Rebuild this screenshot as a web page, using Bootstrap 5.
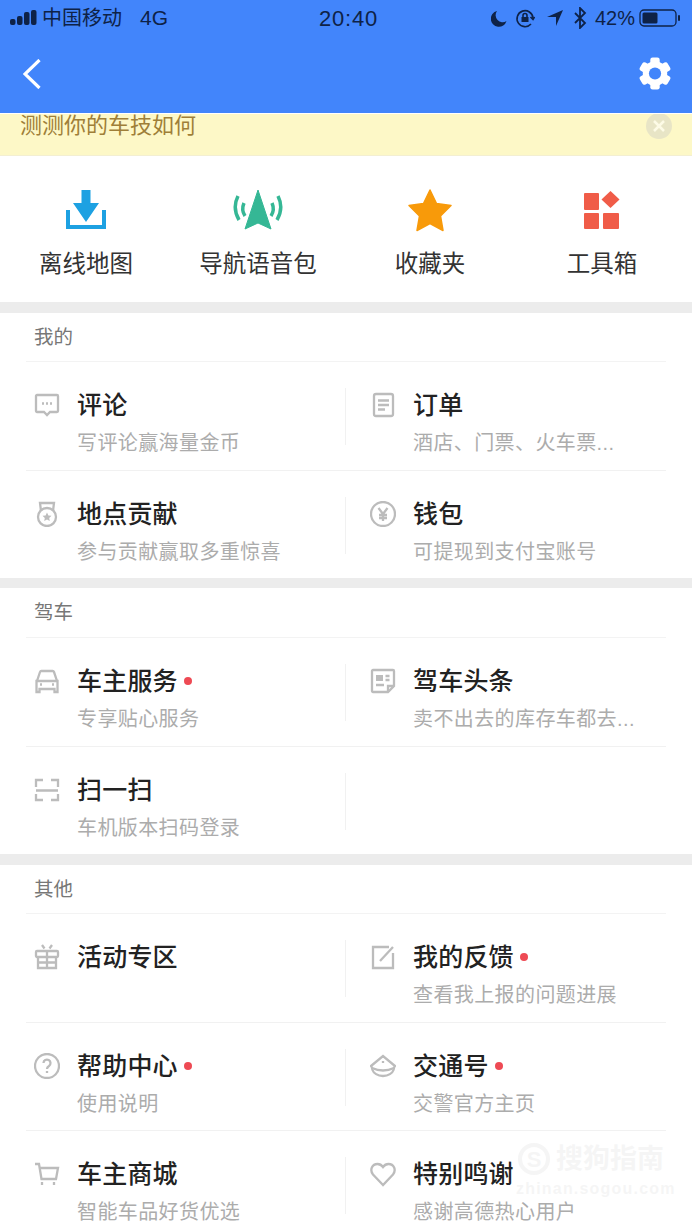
<!DOCTYPE html>
<html lang="zh-CN">

<head>
  <meta charset="UTF-8">
  <meta name="viewport" content="width=device-width, initial-scale=1.0">
  <title>更多工具</title>
  <link href="https://cdn.jsdelivr.net/npm/bootstrap@5.3.0/dist/css/bootstrap.min.css" rel="stylesheet">
  <style>
    body {
      width: 692px;
      height: 1230px;
      overflow: hidden;
      position: relative;
      background: #fff;
      font-family: "Liberation Sans", "Noto Sans CJK SC", sans-serif;
    }

    .top-area {
      background: #4285fb;
    }

    .status-bar {
      height: 36px;
      padding: 0 11px 0 10px;
      color: #0e2247;
      font-size: 20px;
    }

    .status-side {
      flex: 1 1 0;
    }

    .status-time {
      margin-left: 6px;
      font-size: 22px;
      font-weight: 500;
      letter-spacing: .8px;
    }

    .net-type {
      margin-left: 18px;
      font-size: 21px;
    }

    .status-arrow {
      margin-left: 11px;
    }

    .status-bt {
      margin-left: 9px;
    }

    .app-bar {
      height: 77px;
      padding: 0 21px 2px 23px;
    }

    .tip-banner {
      height: 42px;
      margin-top: 1px;
      padding: 0 20px;
      background: #fdf8c7;
      border-bottom: 1px solid #f3efd2;
      color: #9f7f38;
      font-size: 22px;
      line-height: 24px;
    }

    .quick-row {
      height: 146px;
      padding: 32px 4px 0 0;
    }

    .quick-icon {
      height: 44px;
    }

    .quick-label {
      margin-top: 16px;
      color: #333;
      font-size: 23.5px;
      line-height: 32px;
    }

    .gap-band {
      height: 11px;
      background: #ececec;
    }

    .gap-band-sm {
      height: 10px;
    }

    .menu-group {
      padding: 0 26px;
    }

    .group-title {
      height: 49px;
      padding-left: 8px;
      border-bottom: 1px solid #f3f3f3;
      color: #777;
      font-size: 19.5px;
      line-height: 48px;
    }

    .group-title-tall {
      height: 50px;
      line-height: 49px;
    }

    .menu-line {
      height: 108.5px;
      border-bottom: 1px solid #f1f1f1;
    }

    .menu-line-last {
      height: 107.5px;
      border-bottom: 0;
    }

    .menu-cell {
      padding: 26px 0 0 8px;
      gap: 17px;
    }

    .menu-cell-right {
      margin-left: -1px;
      padding-left: 25px;
      background: linear-gradient(#f1f1f1, #f1f1f1) left 26px / 1px 57px no-repeat;
    }

    .menu-icon {
      flex: none;
      width: 26px;
      height: 26px;
      margin-top: 4px;
      fill: none;
      stroke: #bcbcbc;
      stroke-width: 2.3;
    }

    .menu-name {
      color: #222;
      font-size: 25px;
      font-weight: 500;
      letter-spacing: .2px;
      line-height: 34px;
    }

    .new-dot {
      display: inline-block;
      width: 8px;
      height: 8px;
      margin-left: 6px;
      border-radius: 50%;
      background: #ee4a54;
      vertical-align: 5px;
    }

    .menu-desc {
      margin-top: 7px;
      color: #acacac;
      font-size: 20px;
      letter-spacing: .4px;
      line-height: 28px;
      white-space: nowrap;
    }

    /* faint watermark over the last row */
    .water-mark {
      position: absolute;
      left: 516px;
      top: 1143px;
      width: 156px;
      color: #000;
      opacity: .035;
      line-height: 1;
    }

    .water-mark-name {
      font-size: 27px;
      font-weight: 700;
    }

    .water-mark-url {
      margin-top: 6px;
      font-size: 16px;
      font-weight: 700;
      letter-spacing: 1.2px;
    }
  </style>
</head>

<body>
  <div class="top-area">
    <div class="status-bar d-flex align-items-center">
      <div class="status-side d-flex align-items-center">
        <svg width="28" height="16" viewBox="0 0 28 16" fill="#0e2247">
          <rect x="0" y="9" width="5.500" height="6" rx="2" />
          <rect x="7" y="6" width="5.500" height="9" rx="2" />
          <rect x="14" y="2" width="5.500" height="13" rx="2" />
          <rect x="21" y="0" width="5.500" height="15" rx="2" />
        </svg>
        <span class="ms-1">中国移动</span>
        <span class="net-type">4G</span>
      </div>
      <div class="status-time">20:40</div>
      <div class="status-side d-flex align-items-center justify-content-end">
        <svg width="16" height="17" viewBox="0 0 16 17" fill="#0e2247">
          <path d="M6 1a8 8 0 1 0 9.500 10A7 7 0 0 1 6 1z" />
        </svg>
        <svg class="ms-2" width="20" height="20" viewBox="0 0 20 20" fill="none" stroke="#0e2247" stroke-width="1.600">
          <path d="M16 16a8 8 0 1 1 2-6" />
          <path d="M15.500 9l2.500 2.500 1.500-2.500" />
          <rect x="6.500" y="9" width="7" height="5" fill="#0e2247" stroke="none" />
          <path d="M8 9V7.500a2 2 0 0 1 4 0V9" />
        </svg>
        <svg class="status-arrow" width="18" height="18" viewBox="0 0 18 18" fill="#0e2247">
          <path d="M17 1L10 17V8H1z" />
        </svg>
        <svg class="status-bt" width="14" height="22" viewBox="0 0 14 22" fill="none" stroke="#0e2247" stroke-width="1.800">
          <path d="M2 6l10 10-5 5V1l5 5L2 16" />
        </svg>
        <span class="ms-2">42%</span>
        <svg class="ms-1" width="42" height="20" viewBox="0 0 42 20">
          <rect x="1" y="2" width="36" height="16" rx="4" fill="none" stroke="#0e2247" stroke-width="1.300" />
          <rect x="3.500" y="4.500" width="15" height="11" rx="1.500" fill="#0e2247" />
          <rect x="39" y="7" width="2" height="6" rx="1" fill="#0e2247" />
        </svg>
      </div>
    </div>
    <nav class="navbar app-bar">
      <svg width="18" height="30" viewBox="0 0 18 30" fill="none" stroke="#fff" stroke-width="3.200">
        <path d="M16.500 1L2 15l14.500 14" />
      </svg>
      <svg width="32" height="33" viewBox="0 0 34 35">
        <g fill="#fff">
          <rect x="12" y="0.500" width="10" height="34" rx="2.500" />
          <rect x="12" y="0.500" width="10" height="34" rx="2.500" transform="rotate(60 17 17.500)" />
          <rect x="12" y="0.500" width="10" height="34" rx="2.500" transform="rotate(120 17 17.500)" />
        </g>
        <circle cx="17" cy="17.500" r="9.500" fill="none" stroke="#fff" stroke-width="7" />
        <circle cx="17" cy="17.500" r="6.500" fill="#4285fb" />
      </svg>
    </nav>
  </div>

  <div class="tip-banner d-flex justify-content-between">
    <span>测测你的车技如何</span>
    <svg width="26" height="26" viewBox="0 0 26 26">
      <circle cx="13" cy="12" r="13" fill="#e8e5c6" />
      <path d="M8 7l10 10M18 7L8 17" stroke="#fdfbe6" stroke-width="2.500" />
    </svg>
  </div>

  <div class="quick-row row g-0 text-center">
    <div class="col-3">
      <svg class="quick-icon" width="44" height="44" viewBox="0 0 44 44">
        <path d="M17.500 2h9v13h8.500L22 34 9 15h8.500z" fill="#1da1e2" />
        <path d="M2 22h4v15h32V22h4v19H2z" fill="#1da1e2" />
      </svg>
      <div class="quick-label">离线地图</div>
    </div>
    <div class="col-3">
      <svg class="quick-icon" width="54" height="44" viewBox="0 0 54 44">
        <path d="M27 2l13 39-13-6-13 6z" fill="#35b795" stroke="#35b795" stroke-linejoin="round" />
        <g fill="none" stroke="#35b795" stroke-width="3.500">
          <path d="M7 8q-6 12 1 24" />
          <path d="M13 15q-3 7 1 13" />
          <path d="M47 8q6 12-1 24" />
          <path d="M41 15q3 7-1 13" />
        </g>
      </svg>
      <div class="quick-label">导航语音包</div>
    </div>
    <div class="col-3">
      <svg class="quick-icon" width="46" height="44" viewBox="0 0 46 44">
        <path d="M23 2l6.500 13.500 14.500 2-10.500 10.500 2.500 14.500-13-7-13 7 2.500-14.500L2 17.500l14.500-2z" fill="#f89a0a" stroke="#f89a0a" stroke-width="1.500" stroke-linejoin="round" />
      </svg>
      <div class="quick-label">收藏夹</div>
    </div>
    <div class="col-3">
      <svg class="quick-icon" width="40" height="44" viewBox="0 0 40 44" fill="#f05c48">
        <rect x="2" y="5" width="15" height="17" rx="1" />
        <rect x="2" y="25" width="15" height="16" rx="1" />
        <rect x="21" y="25" width="16" height="16" rx="1" />
        <path d="M28.500 3l9 8.500-9 8.500-9-8.500z" />
      </svg>
      <div class="quick-label">工具箱</div>
    </div>
  </div>

  <div class="gap-band"></div>

  <section class="menu-group">
    <div class="group-title">我的</div>
    <div class="menu-line row g-0">
      <div class="col-6 d-flex menu-cell">
        <svg class="menu-icon" viewBox="0 0 26 26">
          <path d="M3 3h20a1 1 0 0 1 1 1v15a1 1 0 0 1-1 1h-7l-3 3-3-3H3a1 1 0 0 1-1-1V4a1 1 0 0 1 1-1z" />
          <path d="M8 11.500h2M12 11.500h2M16 11.500h2" />
        </svg>
        <div>
          <div class="menu-name">评论</div>
          <div class="menu-desc">写评论赢海量金币</div>
        </div>
      </div>
      <div class="col-6 d-flex menu-cell menu-cell-right">
        <svg class="menu-icon" viewBox="0 0 26 26">
          <rect x="4" y="2" width="19" height="22" rx="2" />
          <path d="M8 8.500h11M8 13h11M8 17.500h7" />
        </svg>
        <div>
          <div class="menu-name">订单</div>
          <div class="menu-desc">酒店、门票、火车票...</div>
        </div>
      </div>
    </div>
    <div class="menu-line menu-line-last row g-0">
      <div class="col-6 d-flex menu-cell">
        <svg class="menu-icon" viewBox="0 0 26 26">
          <path d="M7 10L6 2h14l-1 8" />
          <circle cx="13" cy="16" r="9" />
          <path d="M13 11.500l1.400 2.900 3.100.4-2.300 2.100.6 3.100-2.800-1.500-2.800 1.500.6-3.100-2.300-2.100 3.100-.4z" fill="#bcbcbc" stroke="none" />
        </svg>
        <div>
          <div class="menu-name">地点贡献</div>
          <div class="menu-desc">参与贡献赢取多重惊喜</div>
        </div>
      </div>
      <div class="col-6 d-flex menu-cell menu-cell-right">
        <svg class="menu-icon" viewBox="0 0 26 26">
          <circle cx="13" cy="13" r="12" />
          <path d="M8.500 7l4.500 6 4.500-6M13 13v7M9 14h8M9 17h8" />
        </svg>
        <div>
          <div class="menu-name">钱包</div>
          <div class="menu-desc">可提现到支付宝账号</div>
        </div>
      </div>
    </div>
  </section>

  <div class="gap-band gap-band-sm"></div>

  <section class="menu-group">
    <div class="group-title group-title-tall">驾车</div>
    <div class="menu-line row g-0">
      <div class="col-6 d-flex menu-cell">
        <svg class="menu-icon" viewBox="0 0 26 26">
          <path d="M3 13l3-9a1.500 1.500 0 0 1 1.500-1h11A1.500 1.500 0 0 1 20 4l3 9" />
          <path d="M2.500 13h21v11h-3v-3h-15v3h-3z" />
          <path d="M6 16.500h2M18 16.500h2" />
        </svg>
        <div>
          <div class="menu-name">车主服务<span class="new-dot"></span></div>
          <div class="menu-desc">专享贴心服务</div>
        </div>
      </div>
      <div class="col-6 d-flex menu-cell menu-cell-right">
        <svg class="menu-icon" viewBox="0 0 26 26">
          <path d="M3 2h20a1 1 0 0 1 1 1v15l-6 6H3a1 1 0 0 1-1-1V3a1 1 0 0 1 1-1z" />
          <path d="M18 24v-6h6" />
          <rect x="6" y="7" width="7" height="6" fill="#bcbcbc" stroke="none" />
          <path d="M15.500 8h4M15.500 12h4M6 17h8" />
        </svg>
        <div>
          <div class="menu-name">驾车头条</div>
          <div class="menu-desc">卖不出去的库存车都去...</div>
        </div>
      </div>
    </div>
    <div class="menu-line menu-line-last row g-0">
      <div class="col-6 d-flex menu-cell">
        <svg class="menu-icon" viewBox="0 0 26 26">
          <path d="M2 10V3h7M17 3h7v7M2 13.500h22M2 17v6h7M17 23h7v-6" />
        </svg>
        <div>
          <div class="menu-name">扫一扫</div>
          <div class="menu-desc">车机版本扫码登录</div>
        </div>
      </div>
      <div class="col-6 d-flex menu-cell menu-cell-right"></div>
    </div>
  </section>

  <div class="gap-band"></div>

  <section class="menu-group">
    <div class="group-title">其他</div>
    <div class="menu-line row g-0">
      <div class="col-6 d-flex menu-cell">
        <svg class="menu-icon" viewBox="0 0 26 26">
          <rect x="2" y="7" width="22" height="6" rx="1" />
          <path d="M4 13v11h18V13M13 7v17M4 18.500h18" />
          <path d="M8 1l2.500 3.500M18 1l-2.500 3.500" />
        </svg>
        <div>
          <div class="menu-name">活动专区</div>
        </div>
      </div>
      <div class="col-6 d-flex menu-cell menu-cell-right">
        <svg class="menu-icon" viewBox="0 0 26 26">
          <path d="M19 3H3v21h20V9" />
          <path d="M10 17L23 3" />
        </svg>
        <div>
          <div class="menu-name">我的反馈<span class="new-dot"></span></div>
          <div class="menu-desc">查看我上报的问题进展</div>
        </div>
      </div>
    </div>
    <div class="menu-line row g-0">
      <div class="col-6 d-flex menu-cell">
        <svg class="menu-icon" viewBox="0 0 26 26">
          <circle cx="13" cy="13" r="12" />
          <path d="M9.500 10a3.500 3.500 0 1 1 5.500 3c-1.300.8-2 1.500-2 3" />
          <path d="M13 18v2" />
        </svg>
        <div>
          <div class="menu-name">帮助中心<span class="new-dot"></span></div>
          <div class="menu-desc">使用说明</div>
        </div>
      </div>
      <div class="col-6 d-flex menu-cell menu-cell-right">
        <svg class="menu-icon" viewBox="0 0 26 26">
          <path d="M1 13L13 3l12 10c-1 1-1 2-1.500 4-1 3-5 6-10.500 6S3.500 20 2.500 17C2 15 2 14 1 13z" />
          <path d="M2 15q11 5 22 0" />
          <path d="M13 8v2" />
        </svg>
        <div>
          <div class="menu-name">交通号<span class="new-dot"></span></div>
          <div class="menu-desc">交警官方主页</div>
        </div>
      </div>
    </div>
    <div class="menu-line menu-line-last row g-0">
      <div class="col-6 d-flex menu-cell">
        <svg class="menu-icon" viewBox="0 0 26 26">
          <path d="M1 3h4l2.500 15h14.500L24 7H6" />
          <path d="M8 21v3M20 21v3" />
        </svg>
        <div>
          <div class="menu-name">车主商城</div>
          <div class="menu-desc">智能车品好货优选</div>
        </div>
      </div>
      <div class="col-6 d-flex menu-cell menu-cell-right">
        <svg class="menu-icon" viewBox="0 0 26 26">
          <path d="M13 24L3 13.500C-.5 9 2 3 7.500 3c2.500 0 4.200 1.200 5.500 3 1.300-1.800 3-3 5.500-3 5.500 0 8 6 4.500 10.500z" />
        </svg>
        <div>
          <div class="menu-name">特别鸣谢</div>
          <div class="menu-desc">感谢高德热心用户</div>
        </div>
      </div>
    </div>
  </section>

  <div class="water-mark">
    <div class="water-mark-name d-flex align-items-center">
      <svg class="me-1" width="36" height="32" viewBox="0 0 36 32">
        <circle cx="18" cy="16" r="14" fill="none" stroke="#000" stroke-width="4" />
        <text x="18" y="24" text-anchor="middle" font-size="22" font-weight="700" font-family="Liberation Sans">S</text>
      </svg>
      <span>搜狗指南</span>
    </div>
    <div class="water-mark-url">zhinan.sogou.com</div>
  </div>

  <script src="https://cdn.jsdelivr.net/npm/bootstrap@5.3.0/dist/js/bootstrap.bundle.min.js"></script>
</body>

</html>
